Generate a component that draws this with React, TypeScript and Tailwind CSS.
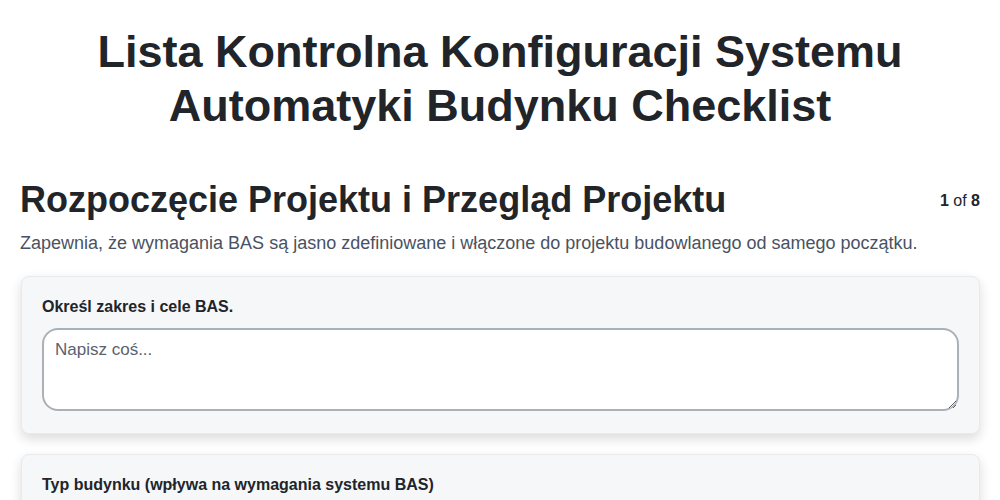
import React from "react";

const items = [
  { label: "Określ zakres i cele BAS.", kind: "text" },
  { label: "Typ budynku (wpływa na wymagania systemu BAS)", kind: "text" },
];

export default function App() {
  return (
    <div
      className="min-h-screen bg-white px-5 text-[#212529]"
      style={{ fontFamily: '"Liberation Sans", Arial, sans-serif' }}
    >
      <h1 className="pt-[25px] text-center text-[45px] font-bold leading-[54px]">
        Lista Kontrolna Konfiguracji Systemu
        <br />
        Automatyki Budynku Checklist
      </h1>

      <div className="mt-[45px] flex items-start justify-between">
        <h2 className="text-[36px] font-bold leading-[44px]">
          Rozpoczęcie Projektu i Przegląd Projektu
        </h2>
        <div className="pt-[11px] text-[16px] leading-[24px]">
          <span className="font-bold">1</span> of <span className="font-bold">8</span>
        </div>
      </div>
      <p className="mt-[8px] text-[18px] leading-[26px] text-[#495262]">
        Zapewnia, że wymagania BAS są jasno zdefiniowane i włączone do projektu budowlanego od samego początku.
      </p>

      <div className="mt-[20px] flex flex-col gap-[20px]">
        {items.map((it) => (
          <div
            key={it.label}
            className="ml-px rounded-lg border border-[#e8eaee] bg-[#f6f7f9] px-5 pb-[22px] pt-[18px] shadow-[0_5px_12px_rgba(0,0,0,0.14)]"
          >
            <label className="mb-[9px] block text-[16px] font-bold leading-[24px]">
              {it.label}
            </label>
            <textarea
              placeholder="Napisz coś..."
              className="block h-[83px] w-full rounded-2xl border-2 border-[#aab1b9] bg-white px-[11px] py-[8px] text-[17px] leading-[24px] text-[#212529] placeholder:text-[#5a6170] outline-none"
            />
          </div>
        ))}
      </div>
    </div>
  );
}
